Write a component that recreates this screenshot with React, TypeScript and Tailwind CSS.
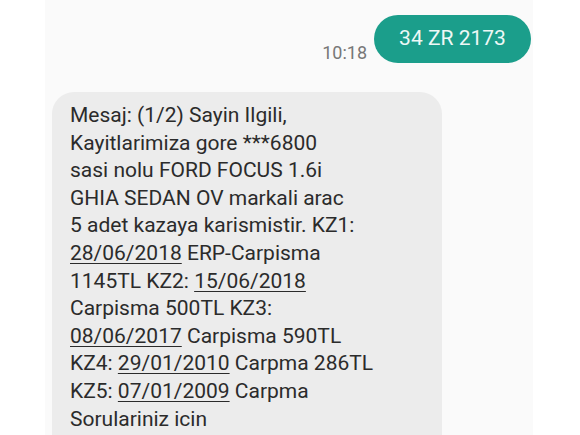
const lines: { text: string; date?: boolean }[][] = [
  [{ text: "Mesaj: (1/2) Sayin Ilgili," }],
  [{ text: "Kayitlarimiza gore ***6800" }],
  [{ text: "sasi nolu FORD FOCUS 1.6i" }],
  [{ text: "GHIA SEDAN OV markali arac" }],
  [{ text: "5 adet kazaya karismistir. KZ1:" }],
  [{ text: "28/06/2018", date: true }, { text: " ERP-Carpisma" }],
  [{ text: "1145TL KZ2: " }, { text: "15/06/2018", date: true }],
  [{ text: "Carpisma 500TL KZ3:" }],
  [{ text: "08/06/2017", date: true }, { text: " Carpisma 590TL" }],
  [{ text: "KZ4: " }, { text: "29/01/2010", date: true }, { text: " Carpma 286TL" }],
  [{ text: "KZ5: " }, { text: "07/01/2009", date: true }, { text: " Carpma" }],
  [{ text: "Sorulariniz icin" }],
];

export default function App() {
  return (
    <div
      className="w-[580px] h-[435px] overflow-hidden bg-white"
      style={{ fontFamily: "Roboto, 'Noto Sans', sans-serif" }}
    >
      <div className="ml-[45px] w-[488px] h-full bg-[#fafafa] flex flex-col">
        {/* Sent message */}
        <div className="flex items-end justify-end gap-[7px] pt-[15px] pr-[2px]">
          <span className="text-[18px] leading-[20px] text-[#777]">10:18</span>
          <div className="h-[48px] w-[157px] rounded-full bg-[#1b9e8b] flex items-center justify-center text-[21px] text-[#eef8f6]">
            34 ZR 2173
          </div>
        </div>

        {/* Received message */}
        <div className="ml-[7px] mt-[29px] w-[390px] rounded-t-[22px] bg-[#ececec] pl-[18px] pt-[10px] pb-6 text-[21px] leading-[27.6px] text-[#2b2b2b]">
          {lines.map((parts, i) => (
            <div key={i} className="whitespace-pre">
              {parts.map((p, j) =>
                p.date ? (
                  <span key={j} className="underline decoration-[1px] underline-offset-[3px]">
                    {p.text}
                  </span>
                ) : (
                  <span key={j}>{p.text}</span>
                )
              )}
            </div>
          ))}
        </div>
      </div>
    </div>
  );
}
